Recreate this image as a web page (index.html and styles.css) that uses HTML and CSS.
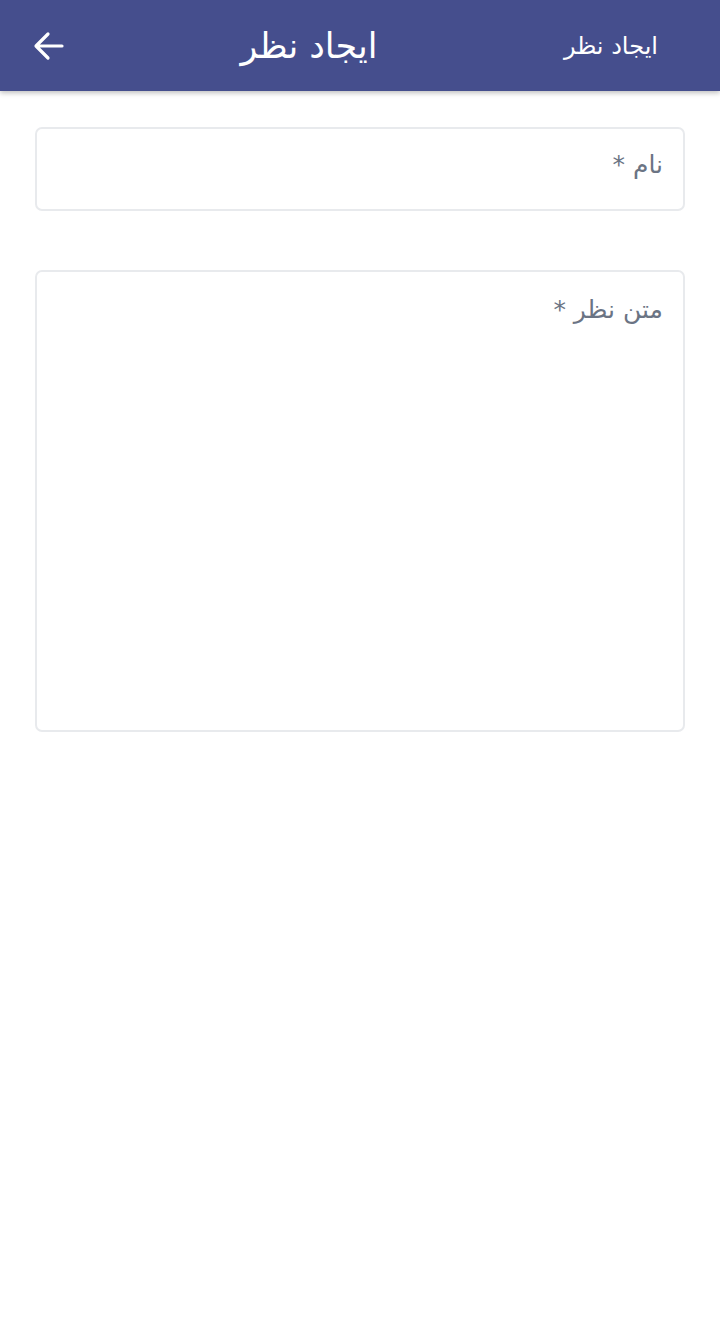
FILE: index.html
```html
<!DOCTYPE html>
<html lang="fa" dir="rtl">
<head>
<meta charset="utf-8">
<link rel="stylesheet" href="styles.css">
</head>
<body>
<header class="appbar">
  <div class="appbar-side">ایجاد نظر</div>
  <div class="appbar-title">ایجاد نظر</div>
  <div class="appbar-back">
    <svg width="32" height="32" viewBox="0 0 32 32"><path d="M29 16H4M15 4L3 16l12 12" fill="none" stroke="#fff" stroke-width="3.2" stroke-linecap="round" stroke-linejoin="round"/></svg>
  </div>
</header>
<main class="form">
  <div class="field field-name"><span class="placeholder">نام *</span></div>
  <div class="field field-text"><span class="placeholder">متن نظر *</span></div>
</main>
</body>
</html>
```
FILE: styles.css
```css
html, body { margin: 0; padding: 0; background: #fff; }
body { font-family: "DejaVu Sans", "Noto Sans", sans-serif; width: 720px; }
.appbar {
  height: 91px;
  background: #454e8d;
  display: grid;
  grid-template-columns: 200px 1fr 200px;
  align-items: center;
  color: #fff;
  box-shadow: 0 2px 5px rgba(0,0,0,0.25);
}
.appbar-side { font-size: 24px; padding-right: 62px; text-align: right; }
.appbar-title { font-size: 35px; text-align: center; padding-right: 102px; }
.appbar-back { display: flex; justify-content: flex-start; padding-left: 33px; direction: ltr; }
.appbar-back svg { display: block; }
.form { padding: 36px 35px 0; display: flex; flex-direction: column; gap: 59px; }
.field {
  border: 2px solid #e8eaed;
  border-radius: 7px;
  box-sizing: border-box;
  padding: 21px 20px 0;
  color: #6b7484;
  font-size: 25px;
}
.field-name { height: 84px; }
.field-text { height: 462px; padding-top: 23px; }
.placeholder { display: block; }
```
